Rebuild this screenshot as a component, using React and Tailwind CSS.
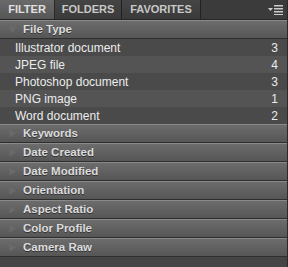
import React from 'react';

const FILE_TYPES = [
    ['Illustrator document', 3],
    ['JPEG file', 4],
    ['Photoshop document', 3],
    ['PNG image', 1],
    ['Word document', 2],
];

const SECTIONS = ['Keywords', 'Date Created', 'Date Modified', 'Orientation', 'Aspect Ratio', 'Color Profile', 'Camera Raw'];

function Triangle({ open }) {
    return (
        <svg width="9" height="9" viewBox="0 0 9 9" className="shrink-0">
            {open
                ? <polygon points="0.5,1.5 8.5,1.5 4.5,8" fill="#6a6a6a" />
                : <polygon points="1.5,0.5 8,4.5 1.5,8.5" fill="#6a6a6a" />}
        </svg>
    );
}

function SectionHeader({ label, open }) {
    return (
        <div className="h-[19px] flex items-center gap-[6px] pl-[8px] border-t border-[#8a8a8a] border-b border-b-[#2e2e2e] bg-gradient-to-b from-[#6c6c6c] to-[#565656]">
            <Triangle open={open} />
            <span className="text-[11.5px] font-bold text-[#dcdcdc] [text-shadow:0_1px_0_#333]">{label}</span>
        </div>
    );
}

export default function App() {
    return (
        <div className="w-[288px] h-[267px] overflow-hidden bg-gradient-to-b from-[#5e5e5e] to-[#444] border-r border-[#2a2a2a] select-none"
             style={{ fontFamily: '"Liberation Sans", Arial, sans-serif' }}>

            {/* ── Tabs ── */}
            <div className="h-[20px] flex items-stretch bg-[#3b3b3b] border-b border-[#262626]">
                <div className="w-[55px] flex items-center justify-center bg-gradient-to-b from-[#6a6a6a] to-[#565656] text-[11px] font-bold text-[#e0e0e0] border-r border-[#2a2a2a]">
                    FILTER
                </div>
                <div className="w-[67px] flex items-center justify-center text-[11px] font-bold text-[#c8c8c8] border-r border-[#222] bg-gradient-to-b from-[#454545] to-[#3a3a3a]">
                    FOLDERS
                </div>
                <div className="w-[79px] flex items-center justify-center text-[11px] font-bold text-[#c8c8c8] border-r border-[#222] bg-gradient-to-b from-[#454545] to-[#3a3a3a]">
                    FAVORITES
                </div>
                <div className="flex-1 flex items-center justify-end pr-[3px]">
                    <svg width="16" height="10" viewBox="0 0 16 10">
                        <polygon points="0,3 5,3 2.5,6" fill="#ccc" />
                        <rect x="6" y="0" width="9" height="1.5" fill="#ccc" />
                        <rect x="6" y="3" width="9" height="1.5" fill="#ccc" />
                        <rect x="6" y="6" width="9" height="1.5" fill="#ccc" />
                        <rect x="6" y="9" width="9" height="1" fill="#ccc" />
                    </svg>
                </div>
            </div>

            <SectionHeader label="File Type" open />

            {FILE_TYPES.map(([name, count], i) => (
                <div key={name}
                     className={`h-[17px] flex items-center justify-between pl-[15px] pr-[9px] text-[12px] text-[#ececec] ${i % 2 ? 'bg-[#545454]' : 'bg-[#4a4a4a]'}`}>
                    <span>{name}</span>
                    <span>{count}</span>
                </div>
            ))}

            {SECTIONS.map((s) => <SectionHeader key={s} label={s} />)}
        </div>
    );
}
